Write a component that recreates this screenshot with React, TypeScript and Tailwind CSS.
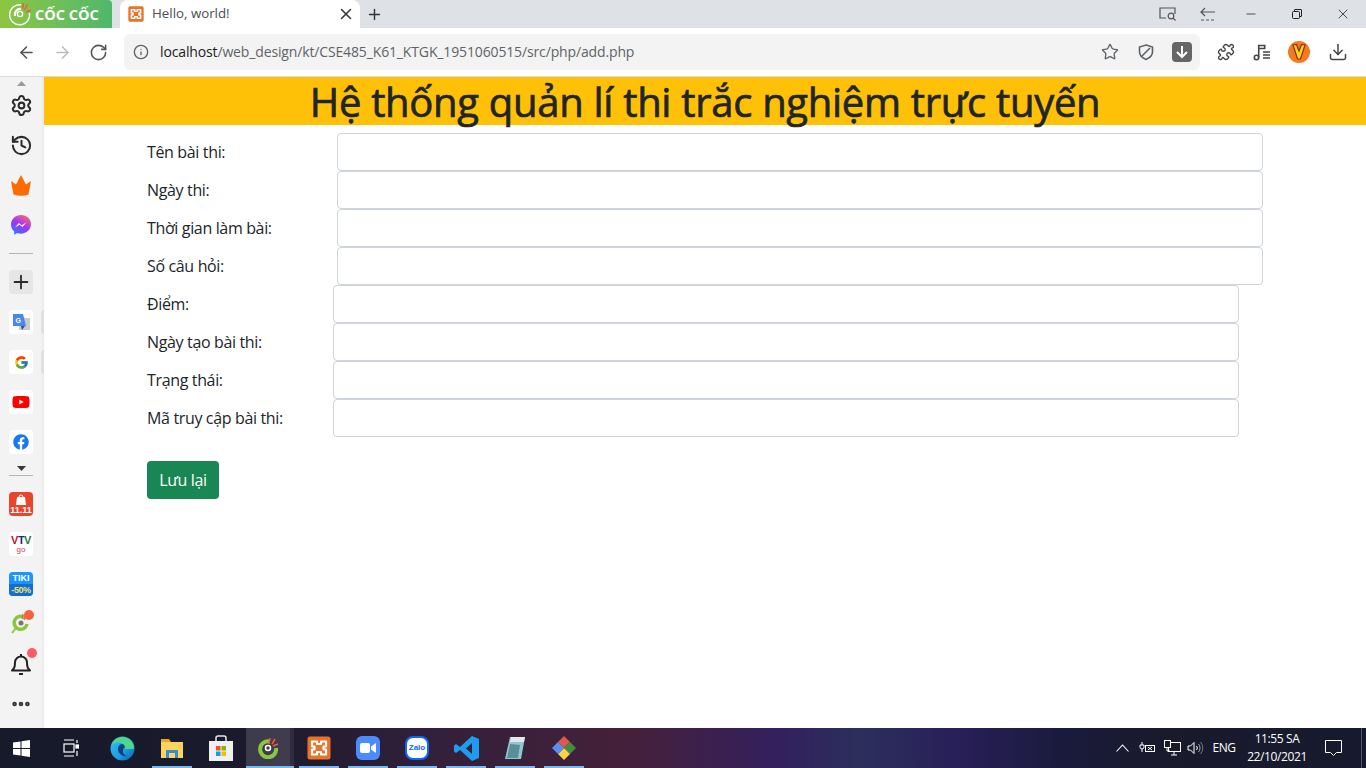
import React from "react";
import { ArrowLeft, ArrowRight, RotateCw, Info, Star, Puzzle, Download, Settings, History, Plus, X, Minus, Ellipsis } from "lucide-react";
import { FaFacebook, FaYoutube } from "react-icons/fa";
import { FcGoogle } from "react-icons/fc";

const CocLogo = ({ size = 24, color = "#fff" }: { size?: number; color?: string }) => (
  <svg width={size} height={size} viewBox="0 0 24 24" fill="none">
    <path d="M13 2.800A10 10 0 1 0 21.500 11" stroke={color} strokeWidth="1.400" />
    <path d="M7 14a5.500 5.500 0 0 1 6-7" stroke={color} strokeWidth="2.200" />
    <circle cx="12" cy="12" r="2.600" stroke={color} strokeWidth="1.400" />
    <path d="M15.500 1 L14.500 7 M19.500 2.500 L16.500 8 M23 8 L18 10" stroke="#f25b3a" strokeWidth="1.500" />
  </svg>
);

const Xampp = ({ size = 24 }: { size?: number }) => (
  <svg width={size} height={size} viewBox="0 0 24 24">
    <rect x="0.500" y="0.500" width="23" height="23" rx="2.500" fill="#e8742a" />
    <path d="M5 5.500h5v2.500h4V5.500h5v5h-2.500v3H19v5h-5V16h-4v2.500H5v-5h2.500v-3H5z" fill="none" stroke="#fff" strokeWidth="2.200" strokeLinejoin="round" />
  </svg>
);

const Shield = () => (
  <svg width="18" height="18" viewBox="0 0 18 18" fill="none" stroke="#5f6368" strokeWidth="1.600">
    <path d="M9 2 L15.500 4 V9 C15.500 12.500 12.500 15 9 16.500 C5.500 15 2.500 12.500 2.500 9 V4 Z" />
    <path d="M13 5 L5 13" />
  </svg>
);

const MusicList = () => (
  <svg width="20" height="20" viewBox="0 0 20 20" fill="none" stroke="#444" strokeWidth="1.600">
    <circle cx="4.500" cy="15.500" r="2.200" />
    <path d="M6.700 15.500V3.500h6v3H7M11 10h7M11 13h7M11 16h7" />
  </svg>
);

const Messenger = () => (
  <svg width="20" height="20" viewBox="0 0 20 20">
    <defs>
      <linearGradient id="msg" x1="0.200" y1="1" x2="0.800" y2="0">
        <stop offset="0" stopColor="#2a7bff" />
        <stop offset="0.500" stopColor="#a033ff" />
        <stop offset="1" stopColor="#ff6968" />
      </linearGradient>
    </defs>
    <path d="M10 0C4.500 0 0 4.100 0 9.600c0 2.900 1.200 5.300 3.200 7v3.200l3-1.700c1.200.4 2.500.6 3.800.6 5.500 0 10-4.100 10-9.600S15.500 0 10 0z" fill="url(#msg)" />
    <path d="M4 12.500l3.800-4.500 3 2.300 4.500-2.700-3.700 4.500-3-2.300z" fill="#fff" />
  </svg>
);

const Crown = () => (
  <svg width="20" height="21" viewBox="0 0 20 21">
    <path d="M0 6l5 3.500L10 0l5 9.500L20 6l-2.500 13.500Q10 22 2.500 19.500z" fill="#ff6a00" />
  </svg>
);

const BellIcon = () => (
  <svg width="22" height="23" viewBox="0 0 22 23" fill="none" stroke="#222" strokeWidth="2">
    <path d="M2 17.500h18c-2-2-3-3-3-8a6 6 0 0 0-12 0c0 5-1 6-3 8z" strokeLinejoin="round" />
    <path d="M11 1v2M9 21h4" />
  </svg>
);

const SideItem = ({ children, box }: { children: React.ReactNode; box?: boolean }) => (
  <div className="h-10 w-full flex items-center justify-center shrink-0">
    {box ? <div className="w-6 h-6 bg-white rounded flex items-center justify-center">{children}</div> : children}
  </div>
);

const Caret = ({ up, color }: { up?: boolean; color: string }) => (
  <svg width="9" height="5" viewBox="0 0 9 5">
    <path d={up ? "M0 5L4.500 0L9 5z" : "M0 0L4.500 5L9 0z"} fill={color} />
  </svg>
);

const Sidebar = () => (
  <aside className="w-11 shrink-0 bg-[#f3f3f3] flex flex-col items-center border-r-2 border-[#ececec] relative">
    <div className="h-2 w-full flex items-start justify-center pt-1"><Caret up color="#9a9a9a" /></div>
    <SideItem><Settings size={23} color="#2b2b2b" strokeWidth={2.100} /></SideItem>
    <SideItem><History size={23} color="#2b2b2b" strokeWidth={2.100} /></SideItem>
    <SideItem><Crown /></SideItem>
    <SideItem><Messenger /></SideItem>
    <div className="h-[17px] w-full flex items-center justify-center shrink-0"><div className="w-6 h-px bg-[#b5b5b5]" /></div>
    <SideItem>
      <div className="w-6 h-6 bg-[#e6e6e6] rounded flex items-center justify-center"><Plus size={22} color="#2b2b2b" strokeWidth={2} /></div>
    </SideItem>
    <SideItem box>
      <svg width="17" height="17" viewBox="0 0 17 17">
        <rect x="6" y="4" width="11" height="12" fill="#c9c9c9" />
        <path d="M0 0h10l3 12H0z" fill="#4a86f0" />
        <path d="M8 12l1 4 3-4z" fill="#2f4da0" />
        <text x="2.500" y="8.500" fontSize="7" fill="#fff" fontFamily="Liberation Sans, sans-serif" fontWeight="700">G</text>
      </svg>
    </SideItem>
    <SideItem box><FcGoogle size={15} /></SideItem>
    <SideItem box><FaYoutube size={18} color="#ff0000" /></SideItem>
    <SideItem box><FaFacebook size={16} color="#1877f2" /></SideItem>
    <div className="h-[22px] w-full flex flex-col items-center shrink-0 pt-1">
      <Caret color="#3a3a3a" />
      <div className="w-6 h-px bg-[#b5b5b5] mt-1" />
    </div>
    <SideItem>
      <div className="w-6 h-6 rounded-sm bg-[#e8452c] flex flex-col items-center justify-end overflow-hidden">
        <svg width="10" height="11" viewBox="0 0 10 11" fill="#fff"><path d="M1 3h8l1 8H0z" /><path d="M3 3a2 2 0 0 1 4 0" fill="none" stroke="#fff" /></svg>
        <span className="text-[9px] leading-[11px] font-bold text-white font-['Liberation_Sans',sans-serif]">11.11</span>
      </div>
    </SideItem>
    <SideItem>
      <div className="w-6 h-6 bg-white rounded flex flex-col items-center justify-center">
        <span className="text-[11px] leading-[11px] font-bold text-[#c4122f] font-['Liberation_Sans',sans-serif] tracking-[-0.5px]">V<span className="text-[#1d2a6d]">T</span><span className="text-[#1e7a46]">V</span></span>
        <span className="text-[8px] leading-[8px] text-[#e3344f] font-['Liberation_Sans',sans-serif]">go</span>
      </div>
    </SideItem>
    <SideItem>
      <div className="w-6 h-6 rounded-sm bg-[#1a94ff] flex flex-col items-center overflow-hidden">
        <span className="text-[9px] leading-[12px] font-bold text-white font-['Liberation_Sans',sans-serif]">TIKI</span>
        <span className="w-full text-center bg-[#0f6fd6] text-[9px] leading-[12px] font-bold text-[#ffe14d] font-['Liberation_Sans',sans-serif] tracking-[-0.4px]">-50%</span>
      </div>
    </SideItem>
    <SideItem>
      <div className="relative">
        <svg width="22" height="22" viewBox="0 0 22 22" fill="none">
          <path d="M15 5a6.500 6.500 0 1 0 2 6" stroke="#8cc63f" strokeWidth="3.500" />
          <circle cx="11" cy="10" r="2.500" fill="#777" />
          <path d="M6 15l-4 5" stroke="#8cc63f" strokeWidth="2" />
          <path d="M13 1l-1 5M16 3l-2 4" stroke="#f25b3a" strokeWidth="1.200" />
        </svg>
        <div className="absolute -top-[3px] -right-[2px] w-2.5 h-2.5 rounded-full bg-[#f4623f]" />
      </div>
    </SideItem>
    <SideItem>
      <div className="relative">
        <BellIcon />
        <div className="absolute -top-[5px] -right-[5px] w-2.5 h-2.5 rounded-full bg-[#ff5a66]" />
      </div>
    </SideItem>
    <SideItem><Ellipsis size={22} color="#333" strokeWidth={3} /></SideItem>
    <div className="absolute left-[41px] top-[233px] w-[3px] h-6 bg-[#e0e0e0] rounded-l" />
    <div className="absolute left-[41px] top-[273px] w-[3px] h-6 bg-[#e0e0e0] rounded-l" />
  </aside>
);

const TabStrip = () => (
  <div className="h-7 bg-[#dee1e6] flex items-stretch font-['Open_Sans',sans-serif]">
    <div className="w-28 rounded-tr bg-gradient-to-r from-[#8cc63f] to-[#4db86a] flex items-center pl-2 gap-[3px]">
      <CocLogo size={24} />
      <span className="text-[14.500px] font-bold text-white leading-none mt-[2px]">CỐC CỐC</span>
    </div>
    <div className="w-60 ml-2 bg-white rounded-t-lg flex items-center pl-2 pr-[5px]">
      <Xampp size={16} />
      <span className="ml-2 text-[13.300px] text-[#4a4f55] flex-1">Hello, world!</span>
      <X size={18} color="#333" strokeWidth={2} />
    </div>
    <div className="w-7 flex items-center justify-center"><Plus size={17} color="#333" strokeWidth={2} /></div>
    <div className="flex-1 flex items-center justify-end">
      <div className="w-10 flex items-center justify-center">
        <svg width="18" height="14" viewBox="0 0 18 14" fill="none" stroke="#555" strokeWidth="1.200">
          <path d="M7 11H1V1h15v6" />
          <circle cx="12" cy="9" r="2.800" />
          <path d="M14 11l2.500 2.500" />
        </svg>
      </div>
      <div className="w-10 flex items-center justify-center">
        <svg width="16" height="14" viewBox="0 0 16 14" fill="none" stroke="#555" strokeWidth="1.200">
          <path d="M5 1L1 5h14M1 5l4 4" />
          <path d="M1 13h14" strokeDasharray="3 2" />
        </svg>
      </div>
      <div className="w-[46px] flex items-center justify-center"><Minus size={14} color="#222" strokeWidth={1.300} /></div>
      <div className="w-[46px] flex items-center justify-center">
        <svg width="10" height="10" viewBox="0 0 10 10" fill="none" stroke="#222" strokeWidth="1"><rect x="0.500" y="2.500" width="7" height="7" rx="1" /><path d="M2.500 2.500V1a.5.5 0 0 1 .5-.5h6a.5.5 0 0 1 .5.5v6a.5.5 0 0 1-.5.5H7.500" /></svg>
      </div>
      <div className="w-[46px] flex items-center justify-center"><X size={16} color="#222" strokeWidth={1.200} /></div>
    </div>
  </div>
);

const Toolbar = () => (
  <div className="h-[49px] bg-white border-b border-[#d9dbdf] flex items-center font-['Open_Sans',sans-serif]">
    <div className="w-[124px] flex items-center pl-[17px] gap-[17px] shrink-0">
      <ArrowLeft size={19} color="#555" strokeWidth={2} />
      <ArrowRight size={19} color="#bdbdbd" strokeWidth={2} />
      <RotateCw size={19} color="#555" strokeWidth={2} />
    </div>
    <div className="w-[1076px] h-9 bg-[#f3f3f3] rounded-md flex items-center pl-[9px] pr-2 shrink-0">
      <Info size={16} color="#5f6368" strokeWidth={2} />
      <span className="ml-[11px] text-[14px] leading-5 pb-px text-[#5f6368] flex-1 tracking-[-0.01em]"><span className="text-[#202124]">localhost</span>/web_design/kt/CSE485_K61_KTGK_1951060515/src/php/add.php</span>
      <Star size={18} color="#5f6368" strokeWidth={1.800} />
      <div className="ml-[18px]"><Shield /></div>
      <div className="ml-[17px] w-5 h-5 bg-[#666] rounded-sm flex items-center justify-center"><svg width="12" height="13" viewBox="0 0 12 13" fill="none" stroke="#fff" strokeWidth="2"><path d="M6 0v11M1 6l5 5 5-5" /></svg></div>
    </div>
    <div className="flex-1 flex items-center">
      <div className="w-[52px] flex justify-center"><Puzzle size={18} color="#444" strokeWidth={1.800} /></div>
      <div className="w-5 flex justify-center"><MusicList /></div>
      <div className="w-[54px] flex justify-center">
        <div className="w-[22px] h-[22px] rounded-full bg-[#f47a20] flex items-center justify-center">
          <svg width="14" height="16" viewBox="0 0 14 16" fill="#ffd21f" stroke="#8a2c10" strokeWidth="1.200"><path d="M1 1l3.500-.5L7 7l2.500-6.500L13 1 8.500 15h-3z" /></svg>
        </div>
      </div>
      <div className="w-6 flex justify-center"><Download size={20} color="#444" strokeWidth={1.800} /></div>
    </div>
  </div>
);

const rows1 = ["Tên bài thi:", "Ngày thi:", "Thời gian làm bài:", "Số câu hỏi:"];
const rows2 = ["Điểm:", "Ngày tạo bài thi:", "Trạng thái:", "Mã truy cập bài thi:"];

const Row = ({ label, second }: { label: string; second?: boolean }) => (
  <div className="flex h-[38px] items-center">
    <label className={second ? "w-[186px] shrink-0 leading-6" : "w-[190px] shrink-0 leading-6"}>{label}</label>
    <input className={second ? "w-[906px] h-[38px] bg-white border border-[#ced4da] rounded" : "w-[926px] h-[38px] bg-white border border-[#ced4da] rounded"} />
  </div>
);

const Main = () => (
  <main className="flex-1 bg-white text-[#212529] text-[16px] tracking-[-0.35px] font-['Open_Sans',sans-serif] min-w-0">
    <h1 className="h-12 bg-[#ffc107] text-center text-[40px] font-medium leading-[50px] tracking-[-0.3px] [-webkit-text-stroke:0.7px_#212529]">Hệ thống quản lí thi trắc nghiệm trực tuyến</h1>
    <form className="pt-2 pl-[103px]">
      {rows1.map((r) => <Row key={r} label={r} />)}
      {rows2.map((r) => <Row key={r} label={r} second />)}
      <button type="button" className="mt-6 w-[72px] h-[38px] bg-[#198754] text-white rounded text-center">Lưu lại</button>
    </form>
  </main>
);

const TaskIcon = ({ children, w, ml = 0, under }: { children: React.ReactNode; w: number; ml?: number; under?: boolean }) => (
  <div style={{ width: w, marginLeft: ml }} className="h-10 flex items-center justify-center relative shrink-0">
    {children}
    {under && <div className="absolute bottom-0 left-0 right-0 h-[2px] bg-[#76b9ed]" />}
  </div>
);

const Taskbar = () => (
  <footer className="h-10 flex items-center bg-[linear-gradient(90deg,#171a2a_0%,#1a1a2c_18%,#33203a_32%,#45203a_46%,#33205e_57%,#2c2f5c_63%,#281f58_70%,#1a1a3c_78%,#191a2c_85%,#171a2e_100%)] text-white font-['Open_Sans',sans-serif]">
    <TaskIcon w={43}>
      <svg width="17" height="17" viewBox="0 0 17 17" fill="#fff"><path d="M0 2.500L7.500 1.500V8H0zM8.500 1.300L17 0v8H8.500zM0 9h7.500v6.500L0 14.500zM8.500 9H17v8L8.500 15.700z" /></svg>
    </TaskIcon>
    <TaskIcon w={55}>
      <svg width="16" height="18" viewBox="0 0 16 18" fill="none" stroke="#fff" strokeWidth="1.200"><path d="M1 1h10M1 17h10" /><rect x="1" y="5" width="10" height="8" /><rect x="13" y="6" width="2.500" height="3" fill="#fff" /><path d="M14 1v3M14 12v5" /></svg>
    </TaskIcon>
    <TaskIcon w={48}>
      <svg width="25" height="25" viewBox="0 0 25 25">
        <defs><linearGradient id="edg" x1="0" y1="0" x2="1" y2="1"><stop offset="0" stopColor="#35c1f1" /><stop offset="0.600" stopColor="#1b9de2" /><stop offset="1" stopColor="#0c59a4" /></linearGradient></defs>
        <circle cx="12.500" cy="12.500" r="12" fill="url(#edg)" />
        <path d="M24 12c0-6-5-11-11.500-11C7 1 3 5 2 9c3-3 10-4 13 1 1 2-1 3-1 3h9c.6 0 1-.4 1-1z" fill="#4fd58c" />
        <path d="M13 8c-3 0-5 2-5 5 0 4 4 8 9 7-5-1-5-7-2-9z" fill="#0f3f80" />
      </svg>
    </TaskIcon>
    <TaskIcon w={40} ml={6} under>
      <svg width="22" height="20" viewBox="0 0 22 20"><path d="M0 1h8l2 3H0z" fill="#e8a825" /><rect y="4" width="22" height="16" fill="#ffd35c" /><path d="M5 12h12v8h-3v-5H8v5H5z" fill="#2f8fd8" /></svg>
    </TaskIcon>
    <TaskIcon w={40} ml={9}>
      <svg width="24" height="26" viewBox="0 0 24 26"><rect y="6" width="24" height="20" fill="#f0f0f0" /><path d="M7 6V3a2 2 0 0 1 2-2h6a2 2 0 0 1 2 2v3" fill="none" stroke="#e8e8e8" strokeWidth="1.500" /><rect x="7" y="11" width="4.500" height="4.500" fill="#f25022" /><rect x="12.500" y="11" width="4.500" height="4.500" fill="#7fba00" /><rect x="7" y="16.500" width="4.500" height="4.500" fill="#00a4ef" /><rect x="12.500" y="16.500" width="4.500" height="4.500" fill="#ffb900" /></svg>
    </TaskIcon>
    <div className="w-12 ml-[5px] h-10 relative shrink-0 flex">
      <div className="w-11 h-10 bg-[#ffffff26] flex items-center justify-center">
        <svg width="22" height="22" viewBox="0 0 22 22" fill="none"><path d="M13 4.500a8 8 0 1 0 6 6.500" stroke="#8cc63f" strokeWidth="4" /><circle cx="11" cy="11" r="2.500" stroke="#fff" strokeWidth="1.500" /><path d="M13 1l-1 6M18 2l-3 5M21 7l-5 2" stroke="#f25b3a" strokeWidth="1.500" /></svg>
      </div>
      <div className="w-1 h-10 bg-[#ffffff14]" />
      <div className="absolute bottom-0 left-0 right-0 h-[2px] bg-[#76b9ed]" />
    </div>
    <TaskIcon w={40} ml={5} under><Xampp size={24} /></TaskIcon>
    <TaskIcon w={40} ml={9} under>
      <div className="w-6 h-6 rounded-md bg-[#4a8cff] flex items-center justify-center">
        <svg width="16" height="10" viewBox="0 0 16 10" fill="#fff"><rect width="10" height="10" rx="2" /><path d="M11 3.500L16 0v10l-5-3.500z" /></svg>
      </div>
    </TaskIcon>
    <TaskIcon w={40} ml={9} under>
      <div className="w-6 h-6 rounded-lg bg-white border-2 border-[#0a68ff] flex items-center justify-center">
        <span className="text-[8px] leading-none font-bold text-[#0a68ff] font-['Liberation_Sans',sans-serif]">Zalo</span>
      </div>
    </TaskIcon>
    <TaskIcon w={40} ml={9} under>
      <svg width="25" height="25" viewBox="0 0 25 25"><path d="M18 0l7 3v19l-7 3L6 14l-4 3-2-1.500v-6L2 8l4 3zM18 7l-6 5.500 6 5.500z" fill="#1f9cf0" fillRule="evenodd" /></svg>
    </TaskIcon>
    <TaskIcon w={40} ml={9} under>
      <svg width="22" height="24" viewBox="0 0 22 24"><path d="M6 1h15l-4 22H1z" fill="#8fc7d0" /><path d="M7 1h14l-1 5H6z" fill="#dfe8ec" /><path d="M6 8l10 1-2 13H3z" fill="#5b8f98" /></svg>
    </TaskIcon>
    <TaskIcon w={40} ml={9} under>
      <svg width="24" height="24" viewBox="0 0 24 24"><path d="M12 0l6 6-6 6-6-6z" fill="#e2574c" /><path d="M18 6l6 6-6 6-6-6z" fill="#3f8f3f" /><path d="M12 12l6 6-6 6-6-6z" fill="#f7d34a" /><path d="M6 6l6 6-6 6-6-6z" fill="#5a8ff0" /></svg>
    </TaskIcon>
    <div className="flex-1" />
    <div className="flex items-center">
      <div className="w-6 flex justify-center">
        <svg width="13" height="8" viewBox="0 0 13 8" fill="none" stroke="#fff" strokeWidth="1.100"><path d="M.5 7.500l6-6.500 6 6.500" /></svg>
      </div>
      <div className="w-[26px] flex justify-center">
        <svg width="17" height="13" viewBox="0 0 17 13" fill="none" stroke="#fff" strokeWidth="1"><path d="M3 0v3M1 3h4v2a2 2 0 0 1-4 0zM3 7v3" /><rect x="6.500" y="3.500" width="9" height="6" /><path d="M9 5l4 3M13 5l-4 3" /></svg>
      </div>
      <div className="w-6 flex justify-center">
        <svg width="17" height="16" viewBox="0 0 17 16" fill="none" stroke="#fff" strokeWidth="1"><rect x="4.500" y="2.500" width="12" height="9" /><rect x="0.500" y="0.500" width="6" height="7" fill="#1a1a30" /><path d="M3 8v3h3M7 15h6M10 12v3" /></svg>
      </div>
      <div className="w-[22px] flex justify-center">
        <svg width="17" height="14" viewBox="0 0 17 14" fill="none" stroke="#fff" strokeWidth="1"><path d="M1 5h2.500L7 1.500v11L3.500 9H1z" /><path d="M9.500 5a3 3 0 0 1 0 4" /><path d="M11.500 3a6 6 0 0 1 0 8" opacity="0.6" /><path d="M13.500 1a9 9 0 0 1 0 12" opacity="0.4" /></svg>
      </div>
      <span className="w-9 text-center text-[12px] tracking-[-0.5px]">ENG</span>
    </div>
    <div className="w-14 ml-[7px] flex flex-col items-center text-[12px] tracking-[-0.4px] leading-[18px] whitespace-nowrap">
      <span>11:55 SA</span>
      <span>22/10/2021</span>
    </div>
    <div className="w-14 flex justify-center">
      <svg width="17" height="16" viewBox="0 0 17 16" fill="none" stroke="#fff" strokeWidth="1"><path d="M.5.5h16v12h-5l-3 3-3-3h-5z" /></svg>
    </div>
    <div className="w-[5px] border-l border-[#55506a] h-10" />
  </footer>
);

export default function App() {
  return (
    <div className="w-[1366px] h-[768px] flex flex-col overflow-hidden bg-white">
      <TabStrip />
      <Toolbar />
      <div className="flex-1 flex min-h-0">
        <Sidebar />
        <Main />
      </div>
      <Taskbar />
    </div>
  );
}
